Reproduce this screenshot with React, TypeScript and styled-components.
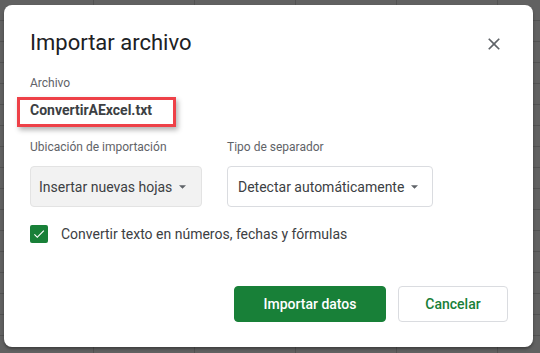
import styled, { createGlobalStyle } from 'styled-components';

const GlobalStyle = createGlobalStyle`
  html, body {
    margin: 0;
    padding: 0;
    height: 100%;
  }
  body {
    font-family: Roboto, "Liberation Sans", Arial, sans-serif;
    background-color: #616161;
    background-image:
      linear-gradient(to right, #525252 1px, transparent 1px),
      linear-gradient(to bottom, #525252 1px, transparent 1px);
    background-size: 101px 100%, 100% 21px;
    background-position: 93px 0, 0 20px;
    overflow: hidden;
  }
`;

const Dialog = styled.div`
  box-sizing: border-box;
  width: 529px;
  height: 342px;
  margin: 5px 0 0 4px;
  padding: 24px 25px 25px 26px;
  background: #fff;
  border-radius: 8px;
  box-shadow: 0 2px 3px rgba(0, 0, 0, 0.35);
  display: flex;
  flex-direction: column;
`;

const Header = styled.div`
  display: flex;
  justify-content: space-between;
  align-items: flex-start;
`;

const Title = styled.h1`
  margin: 0;
  font-size: 22px;
  line-height: 28px;
  font-weight: 400;
  color: #202124;
`;

const CloseButton = styled.button`
  border: 0;
  background: none;
  padding: 0;
  margin: 5px 4px 0 0;
  width: 20px;
  height: 20px;
  display: flex;
  cursor: pointer;
`;

const Label = styled.div<{ $top?: number }>`
  font-size: 12px;
  line-height: 16px;
  color: #5f6368;
  margin-top: ${(p) => p.$top ?? 0}px;
`;

const FileRow = styled.div`
  position: relative;
  margin-top: 9px;
  font-size: 14px;
  line-height: 20px;
  font-weight: 700;
  color: #3c4043;
`;

// red annotation frame drawn over the file name
const Highlight = styled.div`
  position: absolute;
  left: -13px;
  top: -3px;
  width: 153px;
  height: 24px;
  border: 3px solid #ee4148;
  box-shadow: 2px 3px 5px rgba(0, 0, 0, 0.3);
  pointer-events: none;
`;

const Fields = styled.div`
  display: flex;
  gap: 25px;
  margin-top: 19px;
`;

const Field = styled.div`
  display: flex;
  flex-direction: column;
  gap: 11px;
`;

const Select = styled.div<{ $filled?: boolean; $width: number }>`
  box-sizing: border-box;
  width: ${(p) => p.$width}px;
  height: 41px;
  display: flex;
  align-items: center;
  gap: 7px;
  padding: 0 0 0 ${(p) => (p.$filled ? 8 : 10)}px;
  border: 1px solid ${(p) => (p.$filled ? '#e3e3e3' : '#dadce0')};
  border-radius: 4px;
  background: ${(p) => (p.$filled ? '#f2f2f2' : '#fff')};
  font-size: 14px;
  color: #3c4043;
  white-space: nowrap;
  overflow: hidden;
`;

const CheckRow = styled.label`
  display: flex;
  align-items: center;
  gap: 13px;
  margin-top: 18px;
  font-size: 14px;
  line-height: 18px;
  color: #3c4043;
`;

const Box = styled.span`
  width: 18px;
  height: 18px;
  border-radius: 2px;
  background: #188038;
  display: flex;
  align-items: center;
  justify-content: center;
  flex: none;
`;

const Actions = styled.div`
  margin-top: auto;
  display: flex;
  justify-content: flex-end;
  gap: 12px;
`;

const Button = styled.button<{ $primary?: boolean }>`
  box-sizing: border-box;
  height: 36px;
  padding: 0 24px;
  border-radius: 4px;
  font-family: Roboto, "Liberation Sans", Arial, sans-serif;
  font-size: 14px;
  font-weight: 500;
  cursor: pointer;
  border: 1px solid ${(p) => (p.$primary ? '#188038' : '#dadce0')};
  background: ${(p) => (p.$primary ? '#188038' : '#fff')};
  color: ${(p) => (p.$primary ? '#fff' : '#188038')};
  min-width: ${(p) => (p.$primary ? 152 : 110)}px;
`;

function Arrow() {
  return (
    <svg width="7" height="4" viewBox="0 0 10 5" style={{ flex: 'none' }}>
      <path d="M0 0l5 5 5-5z" fill="#5f6368" />
    </svg>
  );
}

export default function App() {
  return (
    <>
      <GlobalStyle />
      <Dialog>
        <Header>
          <Title>Importar archivo</Title>
          <CloseButton aria-label="Cerrar">
            <svg width="20" height="20" viewBox="0 0 24 24">
              <path
                d="M19 6.41L17.59 5 12 10.59 6.41 5 5 6.41 10.59 12 5 17.59 6.41 19 12 13.41 17.59 19 19 17.59 13.41 12z"
                fill="#5f6368"
              />
            </svg>
          </CloseButton>
        </Header>

        <Label $top={18}>Archivo</Label>
        <FileRow>
          ConvertirAExcel.txt
          <Highlight />
        </FileRow>

        <Fields>
          <Field>
            <Label>Ubicación de importación</Label>
            <Select $filled $width={172}>
              Insertar nuevas hojas
              <Arrow />
            </Select>
          </Field>
          <Field>
            <Label>Tipo de separador</Label>
            <Select $width={206}>
              Detectar automáticamente
              <Arrow />
            </Select>
          </Field>
        </Fields>

        <CheckRow>
          <Box>
            <svg width="14" height="14" viewBox="0 0 24 24">
              <path d="M9 16.17L4.83 12l-1.42 1.41L9 19 21 7l-1.41-1.41z" fill="#fff" />
            </svg>
          </Box>
          Convertir texto en números, fechas y fórmulas
        </CheckRow>

        <Actions>
          <Button $primary>Importar datos</Button>
          <Button>Cancelar</Button>
        </Actions>
      </Dialog>
    </>
  );
}
